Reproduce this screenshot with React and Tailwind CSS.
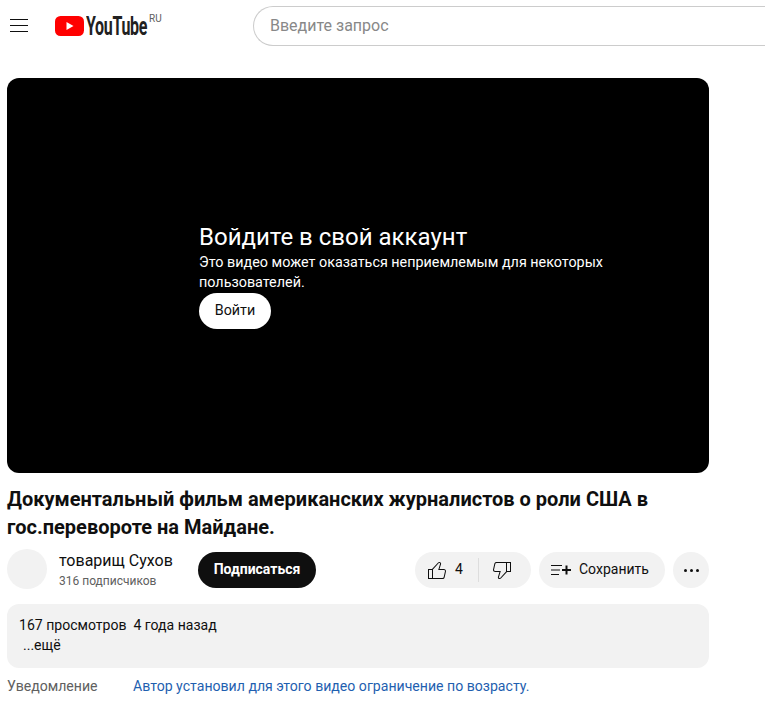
import React from 'react';

const LikeIcon = () => (
  <svg width="24" height="24" viewBox="0 0 24 24" fill="#0f0f0f" className="shrink-0">
    <path d="M18.77,11h-4.23l1.52-4.94C16.38,5.03,15.54,4,14.38,4c-0.58,0-1.14,0.24-1.52,0.65L7,11H3v10h4h1h9.43c1.06,0,1.98-0.67,2.19-1.61l1.34-6C21.23,12.15,20.18,11,18.77,11z M7,20H4v-8h3V20z M19.98,13.17l-1.34,6C18.54,19.65,18.03,20,17.43,20H8v-8.61l5.6-6.06C13.79,5.12,14.08,5,14.38,5c0.26,0,0.5,0.11,0.63,0.3c0.07,0.1,0.15,0.26,0.09,0.47l-1.52,4.94L13.18,12h1.35h4.23c0.41,0,0.8,0.17,1.03,0.46C19.92,12.61,20.05,12.86,19.98,13.17z" />
  </svg>
);

const DislikeIcon = () => (
  <svg width="24" height="24" viewBox="0 0 24 24" fill="#0f0f0f" className="shrink-0">
    <path d="M17,4h-1H6.57C5.5,4,4.59,4.67,4.38,5.61l-1.34,6C2.77,12.85,3.82,14,5.23,14h4.23l-1.52,4.94C7.62,19.97,8.46,21,9.62,21c0.58,0,1.14-0.24,1.52-0.65L17,14h4V4H17z M10.4,19.67C10.21,19.88,9.92,20,9.62,20c-0.26,0-0.5-0.11-0.63-0.3c-0.07-0.1-0.15-0.26-0.09-0.47l1.52-4.94l0.4-1.29H9.46H5.23c-0.41,0-0.8-0.17-1.03-0.46c-0.12-0.15-0.25-0.4-0.18-0.72l1.34-6C5.46,5.35,5.97,5,6.57,5H16v8.61L10.4,19.67z M20,13h-3V5h3V13z" />
  </svg>
);

const SaveIcon = () => (
  <svg width="24" height="24" viewBox="0 0 24 24" fill="none" stroke="#0f0f0f" className="shrink-0">
    <path d="M3 7.5h11M3 12h9M3 16.5h8" strokeWidth="1" />
    <path d="M18.5 7.5v9M14 12h9" strokeWidth="2" />
  </svg>
);

const App = () => {
  return (
    <div className="w-[765px] h-[702px] overflow-hidden bg-white font-['Roboto',sans-serif] text-[#0f0f0f]">
      {/* header */}
      <div className="flex h-[52px] items-start">
        <div className="ml-[10px] mt-[19px] flex w-[18px] shrink-0 flex-col gap-[5px]">
          <div className="h-px bg-[#0f0f0f]" />
          <div className="h-px bg-[#0f0f0f]" />
          <div className="h-px bg-[#0f0f0f]" />
        </div>
        <div className="ml-[27px] mt-[16px] flex w-[198px] shrink-0 items-start">
          <svg width="29" height="20" viewBox="0 0 29 20" className="shrink-0">
            <rect width="29" height="20" rx="5.5" fill="#f00" />
            <path d="M11.5 6v8l7-4z" fill="#fff" />
          </svg>
          <span className="ml-[2px] mt-px w-[61px] origin-left scale-x-[0.64] whitespace-nowrap text-[25px] leading-[20px] font-bold tracking-[-0.5px] text-[#212121]">
            YouTube
          </span>
          <span className="ml-[2px] -mt-[3px] text-[10px] leading-[12px] text-[#606060]">RU</span>
        </div>
        <div className="mt-[6px] flex h-[40px] w-[560px] shrink-0 items-center rounded-l-full border border-r-0 border-[#cccccc] pl-[16px] text-[16px] text-[#888888]">
          Введите запрос
        </div>
      </div>

      <div className="mt-[26px] pl-[7px] w-[709px]">
        {/* player */}
        <div className="h-[395px] rounded-[12px] bg-black pl-[192px] pt-[145px] text-white">
          <div className="text-[24px] leading-[28px]">Войдите в свой аккаунт</div>
          <div className="mt-[2px] w-[420px] text-[14.35px] leading-[20px]">
            Это видео может оказаться неприемлемым для некоторых пользователей.
          </div>
          <div className="flex h-[36px] w-[72px] items-center justify-center rounded-full bg-white text-[14.3px] text-[#0f0f0f]">
            Войти
          </div>
        </div>

        {/* title */}
        <h1 className="mt-[12px] text-[20px] leading-[28px] font-bold">
          Документальный фильм американских журналистов о роли США в гос.перевороте на Майдане.
        </h1>

        {/* channel row */}
        <div className="mt-[8px] flex h-[40px] items-center">
          <div className="h-[40px] w-[40px] shrink-0 rounded-full bg-[#f2f2f2]" />
          <div className="ml-[12px] mt-[2px] w-[139px]">
            <div className="text-[16px] leading-[22px]">товарищ Сухов</div>
            <div className="text-[12px] leading-[18px] text-[#606060]">316 подписчиков</div>
          </div>
          <div className="mt-[2px] flex h-[36px] w-[118px] items-center justify-center rounded-full bg-[#0f0f0f] pb-px text-[14px] font-bold text-white">
            Подписаться
          </div>
          <div className="ml-auto mt-[2px] flex items-center gap-[8px]">
            <div className="flex h-[36px] w-[116px] items-center rounded-full bg-[#f2f2f2] pl-[10px]">
              <LikeIcon />
              <span className="ml-[6px] mb-[2px] w-[23px] text-[14px]">4</span>
              <div className="h-[24px] w-px bg-[#dddddd]" />
              <div className="ml-[11px]">
                <DislikeIcon />
              </div>
            </div>
            <div className="flex h-[36px] w-[126px] items-center rounded-full bg-[#f2f2f2] pl-[9px]">
              <SaveIcon />
              <span className="ml-[7px] mb-[2px] text-[14px]">Сохранить</span>
            </div>
            <div className="flex h-[36px] w-[36px] items-center justify-center gap-[3px] rounded-full bg-[#f2f2f2]">
              <div className="h-[3px] w-[3px] rounded-full bg-[#0f0f0f]" />
              <div className="h-[3px] w-[3px] rounded-full bg-[#0f0f0f]" />
              <div className="h-[3px] w-[3px] rounded-full bg-[#0f0f0f]" />
            </div>
          </div>
        </div>

        {/* description */}
        <div className="mt-[15px] h-[64px] rounded-[12px] bg-[#f2f2f2] px-[12px] pt-[11px] text-[14.05px] leading-[20px]">
          <div>167 просмотров&nbsp;&nbsp;4 года назад</div>
          <div className="pl-[4px]">...ещё</div>
        </div>

        {/* notice */}
        <div className="mt-[9px] flex h-[20px] items-center text-[14.1px]">
          <div className="w-[126px] text-[#606060]">Уведомление</div>
          <div className="text-[#1f5fb0]">Автор установил для этого видео ограничение по возрасту.</div>
        </div>
      </div>
    </div>
  );
};

export default App;
